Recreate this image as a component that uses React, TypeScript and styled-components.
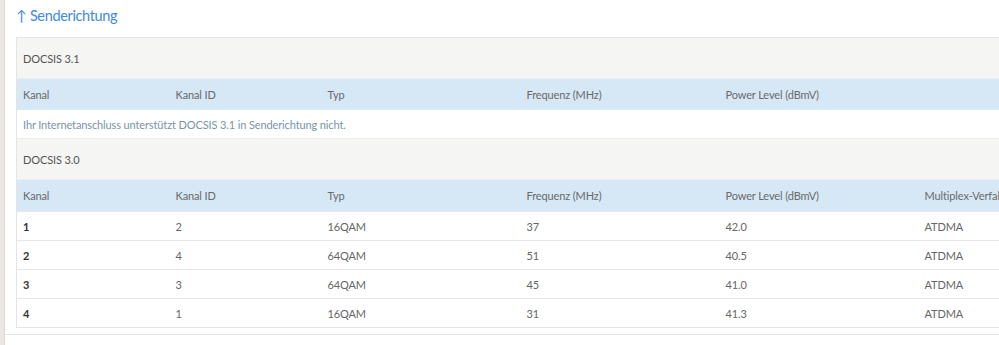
import React from "react";
import styled, { createGlobalStyle } from "styled-components";

const Global = createGlobalStyle`
  html, body { margin: 0; padding: 0; background: #ebe8e4; overflow: hidden; }
  body { font-family: "Lato", "Noto Sans", sans-serif; }
`;

const Page = styled.div`
  display: flex;
  width: 999px;
  height: 345px;
  overflow: hidden;
`;

const Panel = styled.div`
  margin-left: 4px;
  flex: 1;
  background: #fff;
  border-left: 1px solid #dcd8d3;
  display: flex;
  flex-direction: column;
  min-width: 0;
`;

const Section = styled.section`
  padding: 5px 0 6px 11px;
  border-bottom: 1px solid #e2e2e2;
`;

const Heading = styled.h2`
  margin: 0 0 10px 0;
  font-weight: 400;
  font-size: 14.5px;
  letter-spacing: -0.35px;
  line-height: 22px;
  color: #3f8ad8;
  white-space: nowrap;
`;

const Table = styled.table`
  width: 1150px;
  border-collapse: collapse;
  table-layout: fixed;
  border: 1px solid #e4e4e4;
  font-size: 11px;
  letter-spacing: -0.12px;
`;

const GroupCell = styled.td`
  background: #f5f5f3;
  height: 40px;
  padding: 0 6px;
  color: #555;
  border-bottom: 1px solid #eeeeee;
`;

const HeadCell = styled.th`
  background: #d6e7f5;
  height: 31px;
  padding: 0 6px;
  text-align: left;
  font-weight: 400;
  color: #6a6a6a;
  white-space: nowrap;
`;

const Note = styled.td`
  height: 28px;
  padding: 0 6px;
  color: #7895a8;
  border-bottom: 1px solid #ededed;
`;

const Cell = styled.td<{ $bold?: boolean }>`
  height: 28px;
  padding: 0 6px;
  color: ${(p) => (p.$bold ? "#333" : "#666")};
  font-weight: ${(p) => (p.$bold ? 700 : 400)};
  border-top: 1px solid #e8e8e8;
  white-space: nowrap;
`;

const Filler = styled.div`
  flex: 1;
`;

const widths = [153, 152, 199, 199, 199, 248];
const head31 = ["Kanal", "Kanal ID", "Typ", "Frequenz (MHz)", "Power Level (dBmV)", ""];
const head30 = ["Kanal", "Kanal ID", "Typ", "Frequenz (MHz)", "Power Level (dBmV)", "Multiplex-Verfahren"];
const rows = [
  ["1", "2", "16QAM", "37", "42.0", "ATDMA"],
  ["2", "4", "64QAM", "51", "40.5", "ATDMA"],
  ["3", "3", "64QAM", "45", "41.0", "ATDMA"],
  ["4", "1", "16QAM", "31", "41.3", "ATDMA"],
];

export default function App() {
  return (
    <>
      <Global />
      <Page>
        <Panel>
          <Section>
            <Heading>↑ Senderichtung</Heading>
            <Table>
              <colgroup>
                {widths.map((w, i) => (
                  <col key={i} style={{ width: w }} />
                ))}
              </colgroup>
              <tbody>
                <tr>
                  <GroupCell colSpan={6}>DOCSIS 3.1</GroupCell>
                </tr>
                <tr>
                  {head31.map((h, i) => (
                    <HeadCell key={i}>{h}</HeadCell>
                  ))}
                </tr>
                <tr>
                  <Note colSpan={6}>Ihr Internetanschluss unterstützt DOCSIS 3.1 in Senderichtung nicht.</Note>
                </tr>
                <tr>
                  <GroupCell colSpan={6}>DOCSIS 3.0</GroupCell>
                </tr>
                <tr>
                  {head30.map((h, i) => (
                    <HeadCell key={i}>{h}</HeadCell>
                  ))}
                </tr>
                {rows.map((r, ri) => (
                  <tr key={ri}>
                    {r.map((c, ci) => (
                      <Cell key={ci} $bold={ci === 0}>
                        {c}
                      </Cell>
                    ))}
                  </tr>
                ))}
              </tbody>
            </Table>
          </Section>
          <Filler />
        </Panel>
      </Page>
    </>
  );
}
